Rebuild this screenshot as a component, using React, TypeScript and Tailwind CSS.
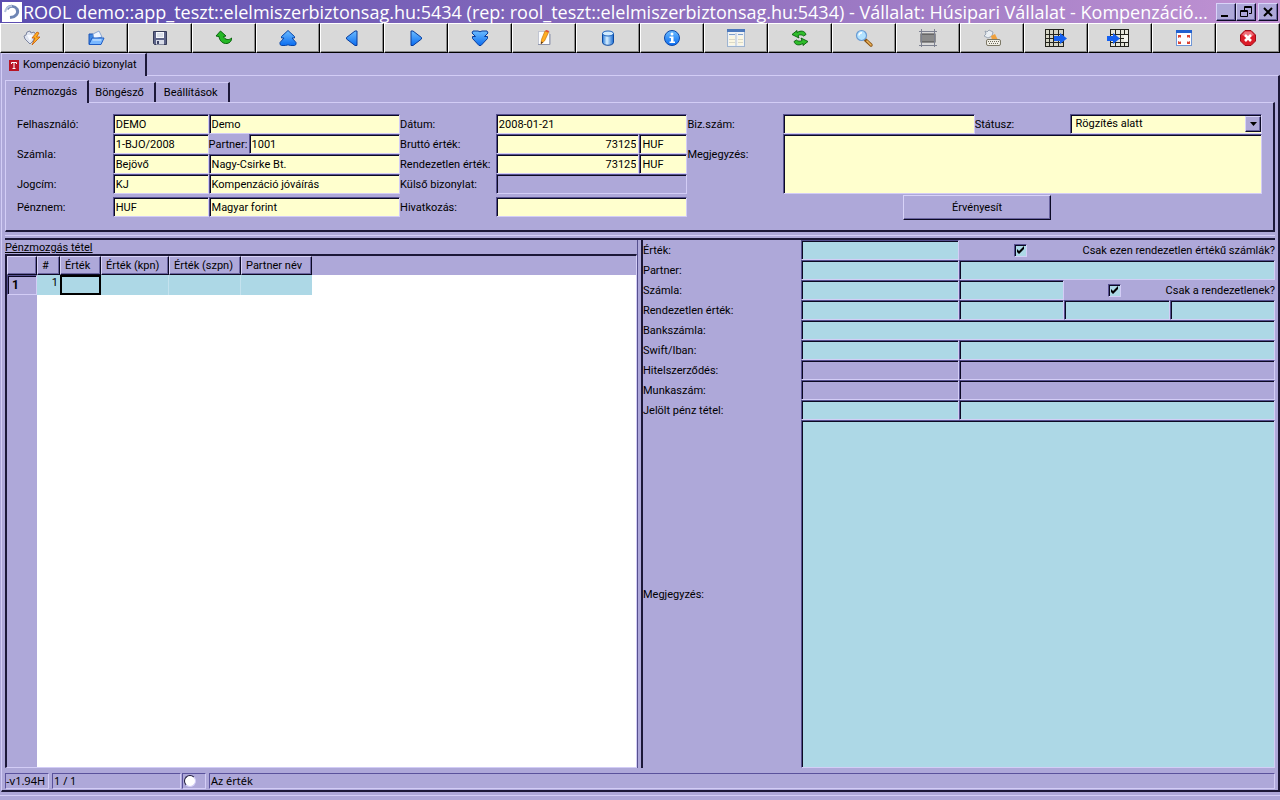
import type { ReactNode } from 'react';

// Shared bevels of the desktop theme
const SUNKEN = "border-t border-l border-b border-r border-t-[#56508f] border-l-[#56508f] border-b-[#d3cdf6] border-r-[#d3cdf6] shadow-[inset_1px_1px_0_#0c0a24]";
const RAISED = "border border-t-[#d8d3f8] border-l-[#d8d3f8] border-b-[#0c0a24] border-r-[#0c0a24] shadow-[inset_-1px_-1px_0_#6a64a0]";
const STATUS = "border border-t-[#5a529c] border-l-[#5a529c] border-b-[#d3cdf6] border-r-[#d3cdf6]";

const TONES = {
  yellow: "bg-[#ffffce]",
  blue: "bg-[#add8e6]",
  none: "bg-[#aea8d9]",
};

const TOOLS: { name: string; icon: ReactNode }[] = [
  {
    name: "Új",
    icon: (
      <>
        <path d="M3 2 L6 1 L7 3 L10 2 L12 5 L9 11 L6 14 L1 9 L0 6 L2 5 Z" fill="#dfe4f0" stroke="#7d86a0" />
        <path d="M3 5 L9 5 L6 11 Z" fill="#f8faff" />
        <path d="M13 2 L8 8 H11 L8 15 L16 7 H12.500 L15 3 Z" fill="#ffb020" stroke="#c65a08" strokeWidth=".8" />
      </>
    ),
  },
  {
    name: "Megnyitás",
    icon: (
      <>
        <path d="M1 14 V4 H5 L7 6 H13 V14 Z" fill="#3f86e0" stroke="#1c55b5" />
        <path d="M5 4 L11 1 L14 7 L6 9 Z" fill="#eef5ff" stroke="#7397cc" strokeWidth=".8" />
        <path d="M1 14.500 L4 8 H16 L13 14.500 Z" fill="#7ab8ff" stroke="#1d5cc4" />
        <path d="M4.500 10 H13" stroke="#d7ecff" />
      </>
    ),
  },
  {
    name: "Mentés",
    icon: (
      <>
        <path d="M1.500 1.500 H14.500 V14.500 H2.500 L1.500 13.500 Z" fill="#5d6488" stroke="#353b58" />
        <rect x="4" y="2" width="8" height="6" fill="#f6f8fc" />
        <path d="M5 4 H11 M5 6 H11" stroke="#c0c8d8" />
        <rect x="4" y="10" width="8" height="4.500" fill="#d8dce8" />
        <rect x="5" y="11" width="2" height="3" fill="#3f4566" />
      </>
    ),
  },
  {
    name: "Visszavonás",
    icon: (
      <path d="M4.500 1 L0 6 L3 6.500 C3.500 11 7 14 11 13.500 C14 13 16 10.500 15.500 8 C13 10.500 9 10 7.500 6.500 L10 6 Z" fill="#25b825" stroke="#08650c" />
    ),
  },
  {
    name: "Első",
    icon: (
      <path d="M8 .5 L14.500 6.500 V8 H12 L16 12.500 V14.500 L14.500 15.500 H10.500 L8 14.800 L5.500 15.500 H1.500 L0 14.500 V12.500 L4 8 H1.500 V6.500 Z" fill="url(#blue)" stroke="#0846a8" />
    ),
  },
  { name: "Előző", icon: <path d="M13 1 V15.500 H11 L2.500 9 V7.500 L11 1 Z" fill="url(#blue)" stroke="#083c9c" /> },
  { name: "Következő", icon: <path d="M3 1 V15.500 H5 L13.500 9 V7.500 L5 1 Z" fill="url(#blue)" stroke="#083c9c" /> },
  {
    name: "Utolsó",
    icon: (
      <path d="M1 1 L6 1 L8 1.800 L10 1 H15 L16 3 L12.500 6.500 H15.500 V8.500 L9 15.500 H7 L.5 8.500 V6.500 H3.500 L0 3 Z" fill="url(#blue)" stroke="#083c9c" />
    ),
  },
  {
    name: "Szerkesztés",
    icon: (
      <>
        <rect x="2.500" y="1.500" width="11" height="13" fill="#fdfdff" stroke="#c2c6d2" />
        <path d="M2 14.500 H14 V4" fill="none" stroke="#8d94ac" />
        <path d="M9 1 L12.500 2.500 L8.500 11 L5 14 L5.500 9.500 Z" fill="#ffae24" stroke="#c87408" strokeWidth=".7" />
        <path d="M5 14 L5.300 11.500 L7 12.300 Z" fill="#3c2a20" />
        <path d="M9 1 L12.500 2.500 L13 1 L10.500 0 Z" fill="#e04a30" />
      </>
    ),
  },
  {
    name: "Adatbázis",
    icon: (
      <>
        <path d="M2.500 3.500 V12.500 C3 16.200 13 16.200 13.500 12.500 V3.500 Z" fill="url(#tube)" stroke="#0c489e" />
        <ellipse cx="8" cy="3.500" rx="5.500" ry="2.500" fill="#d2ecff" stroke="#1b62be" />
      </>
    ),
  },
  {
    name: "Információ",
    icon: (
      <>
        <circle cx="8" cy="8" r="7.500" fill="url(#blue)" stroke="#0d47a8" />
        <circle cx="8" cy="4" r="1.500" fill="#fff" />
        <path d="M5.500 6.500 H9.500 V11.500 H11 V13 H5.500 V11.500 H7 V8 H5.500 Z" fill="#fff" />
      </>
    ),
  },
  {
    name: "Ablak",
    icon: (
      <>
        <rect x="-.5" y=".5" width="17" height="16" fill="#f0f2f4" stroke="#9db4d0" />
        <rect x="-1" y="-1" width="18" height="3" fill="#4b78bc" />
        <path d="M8 3 V16" stroke="#b4c2d4" />
        <path d="M1 4.500 H7 M10 4.500 H15" stroke="#7fa0cc" />
        <rect x="1" y="6" width="6" height="9" fill="#fbf7e2" />
        <rect x="10" y="6" width="5" height="9" fill="#fbf7e2" />
        <path d="M1 9.500 H7 M10 9.500 H15 M1 12.500 H7 M10 12.500 H15" stroke="#dcd9c8" />
      </>
    ),
  },
  {
    name: "Frissítés",
    icon: (
      <g fill="#2fbd2b" stroke="#075f0b" strokeWidth=".9">
        <path d="M0 4.500 L5 .5 V2.500 C9 0 13 1 14 4.500 L11.500 6 C10 4.500 8 4.500 6 5.500 L7 8 Z" />
        <path d="M0 4.500 L5 .5 V2.500 C9 0 13 1 14 4.500 L11.500 6 C10 4.500 8 4.500 6 5.500 L7 8 Z" transform="rotate(180 8 8)" />
      </g>
    ),
  },
  {
    name: "Keresés",
    icon: (
      <>
        <path d="M9.500 10 L15 15" stroke="#8a5210" strokeWidth="3.400" strokeLinecap="round" />
        <path d="M11 11 L15 15" stroke="#eeb55c" strokeWidth="1.600" strokeLinecap="round" />
        <circle cx="5.500" cy="5.500" r="5" fill="#b2e2ff" stroke="#6a9cd4" strokeWidth="1.200" />
        <path d="M3 5.500 C3 3.500 4.500 2.800 6 2.800" fill="none" stroke="#fff" strokeWidth="1.400" />
      </>
    ),
  },
  {
    name: "Keret",
    icon: (
      <>
        <rect x="1" y="4" width="14" height="8" fill="#8b8b8b" stroke="#444" />
        <path d="M-1 1.500 H17 M-1 15.500 H17 M1.500 -1 V17 M14.500 -1 V17" stroke="#7d8190" />
      </>
    ),
  },
  {
    name: "Billentyűzet",
    icon: (
      <>
        <path d="M1 1 L3 2 L5 0 L9 2 L8 6 L4 8 L0 6 L2 4 Z" fill="#e8edf2" stroke="#8b98a8" strokeWidth=".8" />
        <path d="M7 6 L11 4 L14 10 H8 Z" fill="#f0a13c" />
        <rect x="2.500" y="9.500" width="14" height="6" rx="1.500" fill="#f1efe6" stroke="#7c7866" />
        <path d="M4 11.500 H15 M5 13.500 H14" stroke="#6e6a5c" strokeDasharray="1 1" />
      </>
    ),
  },
  {
    name: "Exportálás",
    icon: (
      <>
        <rect x="-2.500" y="-.5" width="18" height="17" fill="#d4d4c4" stroke="#23231c" />
        <path d="M-2 4.500 H15 M-2 8.500 H15 M-2 12.500 H15 M1.500 0 V16 M5.500 0 V16 M10.500 0 V16" stroke="#23231c" />
        <path d="M6 6 H12 V3 L19 8.500 L12 14 V11 H6 Z" fill="#1460f0" />
      </>
    ),
  },
  {
    name: "Importálás",
    icon: (
      <>
        <rect x="-1.500" y="-.5" width="18" height="17" fill="#e6e6da" stroke="#23231c" />
        <path d="M-1 4.500 H16 M-1 8.500 H16 M-1 12.500 H16 M3.500 0 V16 M8.500 0 V16 M12.500 0 V16" stroke="#23231c" />
        <path d="M-5 6 H1 V3 L8 8.500 L1 14 V11 H-5 Z" fill="#1460f0" />
        <rect x="12" y="5" width="4" height="7" fill="#f4f4ee" />
      </>
    ),
  },
  {
    name: "Teljes képernyő",
    icon: (
      <>
        <rect x=".5" y=".5" width="15" height="15" fill="#fdfdff" stroke="#6f96d6" />
        <rect x="0" y="0" width="16" height="3" fill="#2060d0" />
        <path d="M2 5 H5 V8 L4 7 L2 8 Z M14 5 H11 V8 L12 7 L14 8 Z M2 14 H5 V11 L4 12 L2 11 Z M14 14 H11 V11 L12 12 L14 11 Z" fill="#dc4434" />
      </>
    ),
  },
  {
    name: "Kilépés",
    icon: (
      <>
        <path d="M5 .5 H11 L15.500 5 V11 L11 15.500 H5 L.5 11 V5 Z" fill="#dc1c28" stroke="#a00c18" />
        <path d="M5 1.500 H11 L14 5 C10 7 6 7 2 5 Z" fill="#f0707a" />
        <path d="M5 5 L11 11 M11 5 L5 11" stroke="#fff" strokeWidth="2.600" />
      </>
    ),
  },
];

type FieldProps = {
  id: string;
  label?: string;
  value?: string;
  tone?: keyof typeof TONES;
  className?: string;
};

function Field({ id, label, value = "", tone = "yellow", className = "" }: FieldProps) {
  return (
    <input
      id={id}
      aria-label={label}
      defaultValue={value}
      className={`block h-5 min-w-0 rounded-none px-0.5 outline-none ${TONES[tone]} ${SUNKEN} ${className}`}
    />
  );
}

function Label({ htmlFor, children, className = "" }: { htmlFor: string; children: ReactNode; className?: string }) {
  return (
    <label htmlFor={htmlFor} className={`self-center pt-0.5 whitespace-nowrap ${className}`}>
      {children}
    </label>
  );
}

function CheckOption({ id, children, className }: { id: string; children: ReactNode; className: string }) {
  return (
    <div className={`flex h-5 items-center ${className}`}>
      <span className="flex grow justify-center">
        <span className="relative block size-[13px]">
          <input id={id} type="checkbox" defaultChecked className={`peer block size-[13px] appearance-none bg-[#add8e6] ${SUNKEN}`} />
          <svg viewBox="0 0 13 13" className="pointer-events-none absolute inset-0 hidden size-[13px] peer-checked:block">
            <path d="M3 5 V8 L5 10 L10 5 V2 L5 7 Z" fill="#000" />
          </svg>
        </span>
      </span>
      <label htmlFor={id} className="pt-0.5 whitespace-nowrap">{children}</label>
    </div>
  );
}

function TitleBar() {
  return (
    <header className="flex h-[23px] shrink-0 items-center bg-linear-to-r from-[#5b4db0] via-[#8a6cbc] to-[#c193d3] pr-0.5 pl-0.5">
      <svg viewBox="0 0 20 20" className="size-5 shrink-0 bg-white">
        <path d="M5 7 C8 3 13 4 15 7 C17 11 14 15 8 15.500" fill="none" stroke="#6f86b4" strokeWidth="3" />
        <path d="M3 10 C4 6 7 4 10 4" fill="none" stroke="#b4c4dc" strokeWidth="2" />
      </svg>
      <h1 className="ml-px min-w-0 grow overflow-hidden font-['Open_Sans',sans-serif] text-lg leading-[22px] whitespace-nowrap text-white">
        ROOL demo::app_teszt::elelmiszerbiztonsag.hu:5434 (rep: rool_teszt::elelmiszerbiztonsag.hu:5434) - Vállalat: Húsipari Vállalat - Kompenzáció...
      </h1>
      <div className="flex shrink-0">
        <button aria-label="Kis méret" className={`h-[18px] w-5 bg-[#aea8d9] ${RAISED}`}>
          <svg viewBox="0 0 18 16" className="block h-4 w-[18px]"><path d="M4 12 H11" stroke="#000" strokeWidth="2" /></svg>
        </button>
        <button aria-label="Előző méret" className={`h-[18px] w-5 bg-[#aea8d9] ${RAISED}`}>
          <svg viewBox="0 0 18 16" className="block h-4 w-[18px]">
            <path d="M7.500 6 V2.500 H14.500 V9.500 H12 M7 3.500 H15 M3.500 6.500 H10.500 V12.500 H3.500 Z M3 7.500 H11" fill="none" stroke="#000" />
          </svg>
        </button>
        <button aria-label="Bezárás" className={`ml-0.5 h-[18px] w-5 bg-[#aea8d9] ${RAISED}`}>
          <svg viewBox="0 0 18 16" className="block h-4 w-[18px]"><path d="M5 4 L13 12 M13 4 L5 12" stroke="#000" strokeWidth="2" /></svg>
        </button>
      </div>
    </header>
  );
}

function Toolbar() {
  return (
    <nav className="flex h-[30px] shrink-0 bg-[#0c0a14]">
      {TOOLS.map(tool => (
        <button
          key={tool.name}
          aria-label={tool.name}
          className="flex grow basis-0 items-center justify-center border border-t-white border-r-black border-b-black border-l-white bg-[#d9d9d9] shadow-[inset_-1px_-1px_0_#8a8a8a]"
        >
          <svg viewBox="0 0 16 16" className="size-4 overflow-visible">{tool.icon}</svg>
        </button>
      ))}
    </nav>
  );
}

function HeaderForm() {
  return (
    <section className="grid grid-cols-13 grid-rows-[20px_20px_20px_20px_26px] items-center border-t border-r-2 border-b-2 border-l border-t-[#d3cdf6] border-r-[#1c1838] border-b-[#1c1838] border-l-[#d3cdf6] px-[11px] pt-[11px] pb-[10px]">
      <Label htmlFor="user" className="col-start-1 row-start-1">Felhasználó:</Label>
      <Field id="user" value="DEMO" className="col-start-2 row-start-1" />
      <Field id="userName" label="Felhasználó neve" value="Demo" className="col-span-2 col-start-3 row-start-1" />

      <Label htmlFor="invoice" className="col-start-1 row-span-2 row-start-2">Számla:</Label>
      <Field id="invoice" value="1-BJO/2008" className="col-start-2 row-start-2" />
      <div className="col-span-2 col-start-3 row-start-2 flex">
        <Label htmlFor="partner" className="w-10">Partner:</Label>
        <Field id="partner" value="1001" className="grow" />
      </div>
      <Field id="direction" label="Irány" value="Bejövő" className="col-start-2 row-start-3" />
      <Field id="partnerName" label="Partner neve" value="Nagy-Csirke Bt." className="col-span-2 col-start-3 row-start-3" />

      <Label htmlFor="title" className="col-start-1 row-start-4">Jogcím:</Label>
      <Field id="title" value="KJ" className="col-start-2 row-start-4" />
      <Field id="titleName" label="Jogcím neve" value="Kompenzáció jóváírás" className="col-span-2 col-start-3 row-start-4" />

      <Label htmlFor="currency" className="col-start-1 row-start-5">Pénznem:</Label>
      <Field id="currency" value="HUF" className="col-start-2 row-start-5" />
      <Field id="currencyName" label="Pénznem neve" value="Magyar forint" className="col-span-2 col-start-3 row-start-5" />

      <Label htmlFor="date" className="col-start-5 row-start-1">Dátum:</Label>
      <Field id="date" value="2008-01-21" className="col-span-2 col-start-6 row-start-1" />
      <Label htmlFor="gross" className="col-start-5 row-start-2">Bruttó érték:</Label>
      <div className="col-span-2 col-start-6 row-start-2 grid grid-cols-4">
        <Field id="gross" value="73125" className="col-span-3 text-right" />
        <Field id="grossCurrency" label="Bruttó pénznem" value="HUF" />
      </div>
      <Label htmlFor="open" className="col-start-5 row-start-3">Rendezetlen érték:</Label>
      <div className="col-span-2 col-start-6 row-start-3 grid grid-cols-4">
        <Field id="open" value="73125" className="col-span-3 text-right" />
        <Field id="openCurrency" label="Rendezetlen pénznem" value="HUF" />
      </div>
      <Label htmlFor="external" className="col-start-5 row-start-4">Külső bizonylat:</Label>
      <Field id="external" tone="none" className="col-span-2 col-start-6 row-start-4" />
      <Label htmlFor="reference" className="col-start-5 row-start-5">Hivatkozás:</Label>
      <Field id="reference" className="col-span-2 col-start-6 row-start-5" />

      <Label htmlFor="docNumber" className="col-start-8 row-start-1">Biz.szám:</Label>
      <Field id="docNumber" className="col-span-2 col-start-9 row-start-1" />
      <Label htmlFor="status" className="col-start-11 row-start-1">Státusz:</Label>
      <div className="relative col-span-2 col-start-12 row-start-1">
        <select id="status" className={`block h-5 w-full appearance-none rounded-none bg-[#ffffce] pl-1 outline-none ${SUNKEN}`}>
          <option>Rögzítés alatt</option>
        </select>
        <span className={`pointer-events-none absolute top-0.5 right-px flex h-4 w-4 items-center justify-center bg-[#aea8d9] ${RAISED}`}>
          <svg viewBox="0 0 7 4" className="h-1 w-[7px]"><path d="M0 0 H7 L3.500 4 Z" fill="#000" /></svg>
        </span>
      </div>
      <Label htmlFor="note" className="col-start-8 row-span-2 row-start-2">Megjegyzés:</Label>
      <textarea id="note" className={`col-span-5 col-start-9 row-span-3 row-start-2 block h-full resize-none bg-[#ffffce] outline-none ${SUNKEN}`} />
      <button className={`col-span-5 col-start-9 row-start-5 mr-[44%] ml-[25%] h-[25px] pt-px ${RAISED}`}>Érvényesít</button>
    </section>
  );
}

const COLUMNS = [
  { title: "#", width: "w-[23px]" },
  { title: "Érték", width: "w-[41px]" },
  { title: "Érték (kpn)", width: "w-[68px]" },
  { title: "Érték (szpn)", width: "w-[72px]" },
  { title: "Partner név", width: "w-[71px]" },
];

function ItemsTable() {
  return (
    <section className="flex min-w-0 grow basis-0 flex-col border-r border-[#56508f]">
      <h2 className="h-[14px] leading-[16px] underline underline-offset-1">Pénzmozgás tétel</h2>
      <div className="relative flex grow border-t-2 border-r border-b border-l-2 border-t-[#1c1838] border-r-[#d3cdf6] border-b-[#d3cdf6] border-l-[#1c1838]">
        <div className="w-[30px] shrink-0 bg-[#aea8d9]" />
        <div className="grow border-t-[19px] border-[#aea8d9] bg-white" />
        <table className="absolute top-0 left-0 table-fixed border-separate border-spacing-0">
          <thead>
            <tr className="h-[19px]">
              <th className={`w-[30px] p-0 ${RAISED}`} />
              {COLUMNS.map(column => (
                <th key={column.title} className={`p-0 pl-1 text-left font-normal whitespace-nowrap ${column.width} ${RAISED}`}>
                  {column.title}
                </th>
              ))}
            </tr>
          </thead>
          <tbody>
            <tr className="h-5">
              <th className={`bg-[#aea8d9] p-0 pl-1 text-left text-xs font-bold ${SUNKEN}`}>1</th>
              <td className="bg-[#add8e6] p-0 pr-0.5 text-right align-top leading-[16px]">1</td>
              <td className="border-2 border-black bg-[#add8e6] p-0" />
              <td className="border-r border-[#c4e2ee] bg-[#add8e6] p-0" />
              <td className="border-r border-[#c4e2ee] bg-[#add8e6] p-0" />
              <td className="bg-[#add8e6] p-0" />
            </tr>
          </tbody>
        </table>
      </div>
    </section>
  );
}

function DetailForm() {
  return (
    <section className="grid min-w-0 grow basis-0 grid-cols-12 grid-rows-[repeat(9,20px)_1fr] border-l-2 border-[#1c1838]">
      <Label htmlFor="dValue" className="col-span-3">Érték:</Label>
      <Field id="dValue" tone="blue" className="col-span-3" />
      <CheckOption id="onlyValue" className="col-span-6">Csak ezen rendezetlen értékű számlák?</CheckOption>

      <Label htmlFor="dPartner" className="col-span-3">Partner:</Label>
      <Field id="dPartner" tone="blue" className="col-span-3" />
      <Field id="dPartnerName" label="Partner neve" tone="blue" className="col-span-6" />

      <Label htmlFor="dInvoice" className="col-span-3">Számla:</Label>
      <Field id="dInvoice" tone="blue" className="col-span-3" />
      <Field id="dInvoiceType" label="Számla típusa" tone="blue" className="col-span-2" />
      <CheckOption id="onlyOpen" className="col-span-4">Csak a rendezetlenek?</CheckOption>

      <Label htmlFor="dOpen" className="col-span-3">Rendezetlen érték:</Label>
      <Field id="dOpen" tone="blue" className="col-span-3" />
      <Field id="dOpen2" label="Pénznem" tone="blue" className="col-span-2" />
      <Field id="dOpen3" label="Érték" tone="blue" className="col-span-2" />
      <Field id="dOpen4" label="Pénznem" tone="blue" className="col-span-2" />

      <Label htmlFor="dBank" className="col-span-3">Bankszámla:</Label>
      <Field id="dBank" tone="blue" className="col-span-9" />

      <Label htmlFor="dSwift" className="col-span-3">Swift/Iban:</Label>
      <Field id="dSwift" tone="blue" className="col-span-3" />
      <Field id="dIban" label="Iban" tone="blue" className="col-span-6" />

      <Label htmlFor="dCredit" className="col-span-3">Hitelszerződés:</Label>
      <Field id="dCredit" tone="none" className="col-span-3" />
      <Field id="dCreditName" label="Hitelszerződés neve" tone="none" className="col-span-6" />

      <Label htmlFor="dJob" className="col-span-3">Munkaszám:</Label>
      <Field id="dJob" tone="none" className="col-span-3" />
      <Field id="dJobName" label="Munkaszám neve" tone="none" className="col-span-6" />

      <Label htmlFor="dMarked" className="col-span-3">Jelölt pénz tétel:</Label>
      <Field id="dMarked" tone="blue" className="col-span-3" />
      <Field id="dMarkedName" label="Jelölt tétel neve" tone="blue" className="col-span-6" />

      <Label htmlFor="dNote" className="col-span-3">Megjegyzés:</Label>
      <textarea id="dNote" className={`col-span-9 block h-full resize-none bg-[#add8e6] outline-none ${SUNKEN}`} />
    </section>
  );
}

function StatusBar() {
  return (
    <footer className="mt-[5px] mb-px flex h-4 shrink-0 gap-[3px] font-['Noto_Sans',sans-serif] leading-[14px]">
      <span className={`w-11 whitespace-nowrap ${STATUS}`}>-v1.94H</span>
      <span className={`w-[129px] pl-px ${STATUS}`}>1 / 1</span>
      <span className={`-ml-0.5 w-6 pl-px ${STATUS}`}>
        <input type="radio" aria-label="Állapot" className="mt-px block size-3 appearance-none rounded-full border border-t-[#1c1838] border-r-[#d3cdf6] border-b-[#d3cdf6] border-l-[#1c1838] bg-white" />
      </span>
      <span className={`grow pl-px ${STATUS}`}>Az érték</span>
    </footer>
  );
}

export default function App() {
  return (
    <div className="flex h-screen flex-col overflow-hidden bg-[#aea8d9] font-[Roboto,'Liberation_Sans',sans-serif] text-[11px] leading-[14px] text-black">
      <svg className="absolute size-0" aria-hidden="true">
        <defs>
          <linearGradient id="blue" x1="0" y1="0" x2="0" y2="1">
            <stop offset="0" stopColor="#6cbcff" />
            <stop offset="1" stopColor="#0a6cf0" />
          </linearGradient>
          <linearGradient id="tube">
            <stop offset="0" stopColor="#1f74d8" />
            <stop offset=".4" stopColor="#d8f0ff" />
            <stop offset="1" stopColor="#1668d0" />
          </linearGradient>
        </defs>
      </svg>
      <TitleBar />
      <Toolbar />

      <div role="tablist" className="ml-px flex h-[22px] shrink-0">
        <button role="tab" aria-selected="true" className="relative -mb-px flex items-center gap-1 border-t border-r-2 border-l border-t-[#d3cdf6] border-r-[#1c1838] border-l-[#d3cdf6] bg-[#aea8d9] pr-2 pl-[7px]">
          <svg viewBox="0 0 10 11" className="h-[11px] w-2.5">
            <rect width="10" height="11" fill="#b81424" />
            <path d="M2.500 4 V2.500 H7.500 V4 M5 2.500 V8.500 M3.500 8.500 H6.500" fill="none" stroke="#fff" />
          </svg>
          Kompenzáció bizonylat
        </button>
      </div>

      <main className="ml-px flex grow flex-col border-t border-r-2 border-b-2 border-l border-t-[#d3cdf6] border-r-[#1c1838] border-b-[#1c1838] border-l-[#d3cdf6] pr-[3px] pl-[3px]">
        <div role="tablist" className="mt-1 flex h-[22px] shrink-0 items-end">
          <button role="tab" aria-selected="true" className="relative -mb-px h-[23px] border-t border-r-2 border-l border-t-[#d3cdf6] border-r-[#1c1838] border-l-[#d3cdf6] bg-[#aea8d9] pr-2.5 pl-2">Pénzmozgás</button>
          <button role="tab" aria-selected="false" className="h-5 border-t border-r-2 border-t-[#d3cdf6] border-r-[#1c1838] pr-2.5 pl-1.5">Böngésző</button>
          <button role="tab" aria-selected="false" className="h-5 border-t border-r-2 border-t-[#d3cdf6] border-r-[#1c1838] pr-2.5 pl-2">Beállítások</button>
        </div>
        <HeaderForm />
        <div className="mt-[3px] h-[3px] shrink-0 border-t border-[#d3cdf6]" />
        <div className="flex grow gap-[3px] border-t-2 border-[#1c1838]">
          <ItemsTable />
          <DetailForm />
        </div>
        <StatusBar />
      </main>
      <div className="mt-[3px] h-[5px] shrink-0 border-t border-[#d3cdf6]" />
    </div>
  );
}
